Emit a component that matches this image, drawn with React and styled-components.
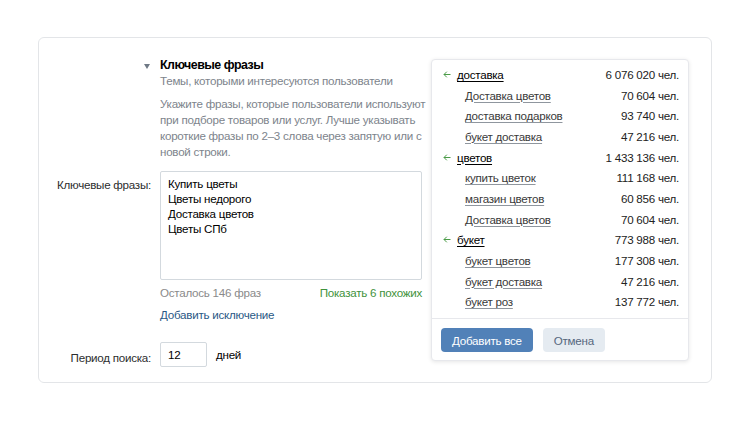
import styled, { createGlobalStyle } from "styled-components";

const groups = [
  {
    word: "доставка",
    count: "6 076 020 чел.",
    items: [
      ["Доставка цветов", "70 604 чел."],
      ["доставка подарков", "93 740 чел."],
      ["букет доставка", "47 216 чел."],
    ],
  },
  {
    word: "цветов",
    count: "1 433 136 чел.",
    items: [
      ["купить цветок", "111 168 чел."],
      ["магазин цветов", "60 856 чел."],
      ["Доставка цветов", "70 604 чел."],
    ],
  },
  {
    word: "букет",
    count: "773 988 чел.",
    items: [
      ["букет цветов", "177 308 чел."],
      ["букет доставка", "47 216 чел."],
      ["букет роз", "137 772 чел."],
    ],
  },
];

const BackArrow = () => (
  <ArrowIcon width="8" height="7" viewBox="0 0 8 7">
    <path
      d="M7.5 3.5H1M3.8 0.7L1 3.5l2.8 2.8"
      fill="none"
      stroke="#4a9b47"
      strokeWidth="1"
    />
  </ArrowIcon>
);

function App() {
  return (
    <Page>
      <Global />
      <Card>
        <Form>
          <Label>
            <Caret />
          </Label>
          <div>
            <Title>Ключевые фразы</Title>
            <Subtitle>Темы, которыми интересуются пользователи</Subtitle>
            <Hint>
              Укажите фразы, которые пользователи используют при подборе
              товаров или услуг. Лучше указывать короткие фразы по 2–3 слова
              через запятую или с новой строки.
            </Hint>
          </div>

          <Label $top>Ключевые фразы:</Label>
          <div>
            <Phrases
              defaultValue={"Купить цветы\nЦветы недорого\nДоставка цветов\nЦветы СПб"}
            />
            <Meta>
              <span>Осталось 146 фраз</span>
              <Similar>Показать 6 похожих</Similar>
            </Meta>
            <Exclude>Добавить исключение</Exclude>
          </div>

          <Label $period>Период поиска:</Label>
          <Period>
            <Days defaultValue="12" />
            <span>дней</span>
          </Period>
        </Form>

        <Popup>
          <List>
            {groups.map((g) => (
              <div key={g.word}>
                <Row>
                  <BackArrow />
                  <Word>{g.word}</Word>
                  <Count>{g.count}</Count>
                </Row>
                {g.items.map(([text, n], i) => (
                  <Row key={i} $sub>
                    <SubWord>{text}</SubWord>
                    <Count>{n}</Count>
                  </Row>
                ))}
              </div>
            ))}
          </List>
          <Footer>
            <Button $primary>Добавить все</Button>
            <Button>Отмена</Button>
          </Footer>
        </Popup>
      </Card>
    </Page>
  );
}

export default App;

const Global = createGlobalStyle`
  body {
    margin: 0;
    background: #fff;
    font-family: "Liberation Sans", Arial, sans-serif;
    font-size: 11.6px;
    letter-spacing: -0.25px;
    color: #000;
  }
`;

const Page = styled.div`
  padding: 37px 0 0 38px;
`;

const Card = styled.div`
  position: relative;
  width: 672px;
  height: 325px;
  border: 1px solid #e3e5e8;
  border-radius: 6px;
  padding-top: 19px;
`;

const Form = styled.div`
  display: grid;
  grid-template-columns: 121px 262px;
`;

const Label = styled.div`
  text-align: right;
  padding-right: 9px;
  color: #2c2d2e;
  line-height: 15px;
  padding-top: ${(p) => (p.$top ? "17px" : p.$period ? "27px" : "0")};
`;

const Caret = styled.span`
  display: inline-block;
  margin-top: 5px;
  margin-right: 1px;
  width: 0;
  height: 0;
  border-left: 3px solid transparent;
  border-right: 3px solid transparent;
  border-top: 5px solid #6f7985;
`;

const Title = styled.div`
  font-size: 12.4px;
  font-weight: bold;
  letter-spacing: -0.5px;
  line-height: 16px;
  color: #000;
`;

const Subtitle = styled.div`
  line-height: 16px;
  color: #7d848c;
`;

const Hint = styled.p`
  margin: 7px 0 0;
  width: 266px;
  line-height: 16px;
  color: #7d848c;
`;

const Phrases = styled.textarea`
  display: block;
  margin-top: 11px;
  width: 262px;
  height: 109px;
  box-sizing: border-box;
  border: 1px solid #d3d9de;
  border-radius: 2px;
  padding: 4px 7px;
  font: inherit;
  letter-spacing: inherit;
  line-height: 15px;
  color: #000;
  resize: none;
  outline: none;
`;

const Meta = styled.div`
  display: flex;
  justify-content: space-between;
  margin-top: 5px;
  line-height: 16px;
  color: #8a8a8a;
`;

const Similar = styled.span`
  color: #3f923c;
`;

const Exclude = styled.div`
  margin-top: 6px;
  line-height: 16px;
  color: #2a5885;
`;

const Period = styled.div`
  display: flex;
  align-items: center;
  gap: 9px;
  margin-top: 19px;
  color: #000;
`;

const Days = styled.input`
  width: 47px;
  height: 25px;
  box-sizing: border-box;
  border: 1px solid #d3d9de;
  border-radius: 2px;
  padding: 0 7px;
  font: inherit;
  letter-spacing: inherit;
  color: #000;
  outline: none;
`;

const Popup = styled.div`
  position: absolute;
  left: 392px;
  top: 21px;
  width: 258px;
  height: 302px;
  box-sizing: border-box;
  background: #fff;
  border: 1px solid #e7e8ec;
  border-radius: 4px;
  box-shadow: 0 1px 4px rgba(0, 0, 0, 0.1);
  display: flex;
  flex-direction: column;
`;

const List = styled.div`
  padding: 4px 9px 6px 9px;
  border-bottom: 1px solid #e7e8ec;
`;

const Row = styled.div`
  display: flex;
  align-items: center;
  height: 20.7px;
  padding-left: ${(p) => (p.$sub ? "24px" : "0")};
`;

const ArrowIcon = styled.svg`
  flex: none;
  margin: 0 6px 0 2px;
`;

const Word = styled.span`
  color: #000;
  text-decoration: underline;
  text-underline-offset: 2px;
`;

const SubWord = styled.span`
  color: #3a3a3a;
  text-decoration: underline;
  text-decoration-color: #8f969e;
  text-underline-offset: 2px;
`;

const Count = styled.span`
  margin-left: auto;
  color: #222;
`;

const Footer = styled.div`
  display: flex;
  gap: 10px;
  padding: 9px 9px;
`;

const Button = styled.button`
  height: 24px;
  padding: 0 11px;
  border: none;
  border-radius: 4px;
  font: inherit;
  letter-spacing: inherit;
  background: ${(p) => (p.$primary ? "#5181b8" : "#e5ebf1")};
  color: ${(p) => (p.$primary ? "#fff" : "#55677d")};
`;
